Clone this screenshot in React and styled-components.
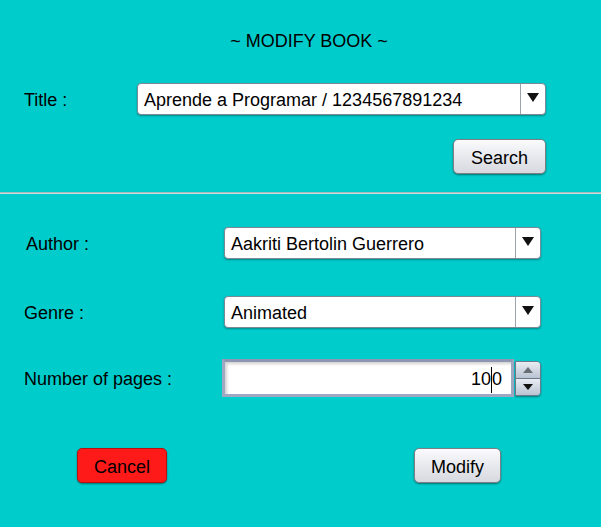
import styled, { createGlobalStyle } from "styled-components";

const GlobalStyle = createGlobalStyle`
  html, body {
    margin: 0;
    padding: 0;
    background: #00cccc;
  }
  body {
    font-family: "Liberation Sans", Arial, sans-serif;
    font-size: 18px;
    color: #000;
  }
`;

const Page = styled.div`
  width: 601px;
  height: 527px;
  background: #00cccc;
  box-sizing: border-box;
  display: flex;
  flex-direction: column;
`;

const TopSection = styled.div`
  display: flex;
  flex-direction: column;
  padding: 30px 55px 0 24px;
  height: 192px;
  box-sizing: border-box;
`;

const Heading = styled.div`
  text-align: center;
  padding-left: 48px;
  height: 22px;
  line-height: 22px;
`;

const Row = styled.div`
  display: flex;
  align-items: center;
  margin-top: ${(p) => p.$top || 0}px;
  padding-left: ${(p) => p.$indent || 0}px;
`;

const Label = styled.div`
  width: ${(p) => p.$width}px;
  flex-shrink: 0;
  padding-top: 3px;
`;

const Combo = styled.div`
  flex: ${(p) => (p.$width ? "none" : "1")};
  width: ${(p) => (p.$width ? `${p.$width}px` : "auto")};
  height: 32px;
  box-sizing: border-box;
  display: flex;
  background: #fff;
  border: 1px solid #7b8a97;
  border-radius: 4px;
  box-shadow: 0 1px 2px rgba(0, 0, 0, 0.35);
`;

const ComboText = styled.div`
  flex: 1;
  padding: 2px 0 0 6px;
  display: flex;
  align-items: center;
`;

const ComboArrow = styled.div`
  width: 24px;
  border-left: 1px solid #9aa4ad;
  display: flex;
  align-items: center;
  justify-content: center;
  padding-bottom: 3px;
  &::after {
    content: "";
    border-left: 6px solid transparent;
    border-right: 6px solid transparent;
    border-top: 9px solid #111;
  }
`;

const ButtonRow = styled.div`
  display: flex;
  justify-content: ${(p) => p.$justify || "flex-end"};
  margin-top: ${(p) => p.$top || 0}px;
  padding: ${(p) => p.$pad || 0};
`;

const Button = styled.button`
  width: ${(p) => p.$width}px;
  height: 35px;
  font-family: "Liberation Sans", Arial, sans-serif;
  font-size: 18px;
  color: #000;
  border-radius: 5px;
  border: 1px solid ${(p) => (p.$danger ? "#b81010" : "#7d7f84")};
  background: ${(p) =>
    p.$danger
      ? "#ff1a1a"
      : "linear-gradient(#fbfbfd 0%, #e8e9ee 50%, #d7d9e0 100%)"};
  box-shadow: 0 1px 2px rgba(0, 0, 0, 0.45);
  padding: 4px 0 0 0;
`;

const Separator = styled.div`
  height: 2px;
  border-top: 1px solid #a9b9bd;
  border-bottom: 1px solid #c8dede;
  box-sizing: border-box;
`;

const BottomSection = styled.div`
  display: flex;
  flex-direction: column;
  padding: 33px 0 0 0;
`;

const Spinner = styled.div`
  width: 319px;
  height: 38px;
  display: flex;
  align-items: center;
`;

const SpinField = styled.div`
  width: 292px;
  height: 38px;
  box-sizing: border-box;
  border: 3px solid #9ea8c2;
  border-top-color: #8d97b3;
  background: #fff;
  box-shadow: inset 2px 2px 3px rgba(0, 0, 0, 0.18);
  display: flex;
  align-items: center;
  justify-content: flex-end;
  padding: 3px 9px 0 0;
`;

const Caret = styled.span`
  display: inline-block;
  width: 1px;
  height: 26px;
  background: #000;
  vertical-align: middle;
`;

const SpinButtons = styled.div`
  width: 26px;
  height: 35px;
  margin-left: 1px;
  display: flex;
  flex-direction: column;
  border: 1px solid #6e7a8c;
  border-radius: 0 4px 4px 0;
  overflow: hidden;
  box-sizing: border-box;
  box-shadow: 0 1px 2px rgba(0, 0, 0, 0.4);
`;

const SpinButton = styled.div`
  flex: 1;
  display: flex;
  align-items: center;
  justify-content: center;
  background: linear-gradient(#e9edf3, #b9c3d2);
  & + & {
    border-top: 1px solid #6e7a8c;
  }
  &::after {
    content: "";
    border-left: 5px solid transparent;
    border-right: 5px solid transparent;
    ${(p) =>
      p.$up ? "border-bottom: 6px solid #6a6f76;" : "border-top: 6px solid #111;"}
  }
`;

function ComboBox({ value, width }) {
  return (
    <Combo $width={width}>
      <ComboText>{value}</ComboText>
      <ComboArrow />
    </Combo>
  );
}

export default function App() {
  return (
    <Page>
      <GlobalStyle />
      <TopSection>
        <Heading>~ MODIFY BOOK ~</Heading>
        <Row $top={31}>
          <Label $width={113}>Title :</Label>
          <ComboBox value="Aprende a Programar / 1234567891234" />
        </Row>
        <ButtonRow $top={24}>
          <Button $width={93}>Search</Button>
        </ButtonRow>
      </TopSection>
      <Separator />
      <BottomSection>
        <Row $indent={26}>
          <Label $width={198}>Author :</Label>
          <ComboBox value="Aakriti Bertolin Guerrero" width={317} />
        </Row>
        <Row $indent={24} $top={37}>
          <Label $width={200}>Genre :</Label>
          <ComboBox value="Animated" width={317} />
        </Row>
        <Row $indent={24} $top={31}>
          <Label $width={198}>Number of pages :</Label>
          <Spinner>
            <SpinField>
              10<Caret />0
            </SpinField>
            <SpinButtons>
              <SpinButton $up />
              <SpinButton />
            </SpinButtons>
          </Spinner>
        </Row>
        <ButtonRow $justify="space-between" $top={51} $pad="0 100px 0 77px">
          <Button $width={90} $danger>
            Cancel
          </Button>
          <Button $width={87}>Modify</Button>
        </ButtonRow>
      </BottomSection>
    </Page>
  );
}
